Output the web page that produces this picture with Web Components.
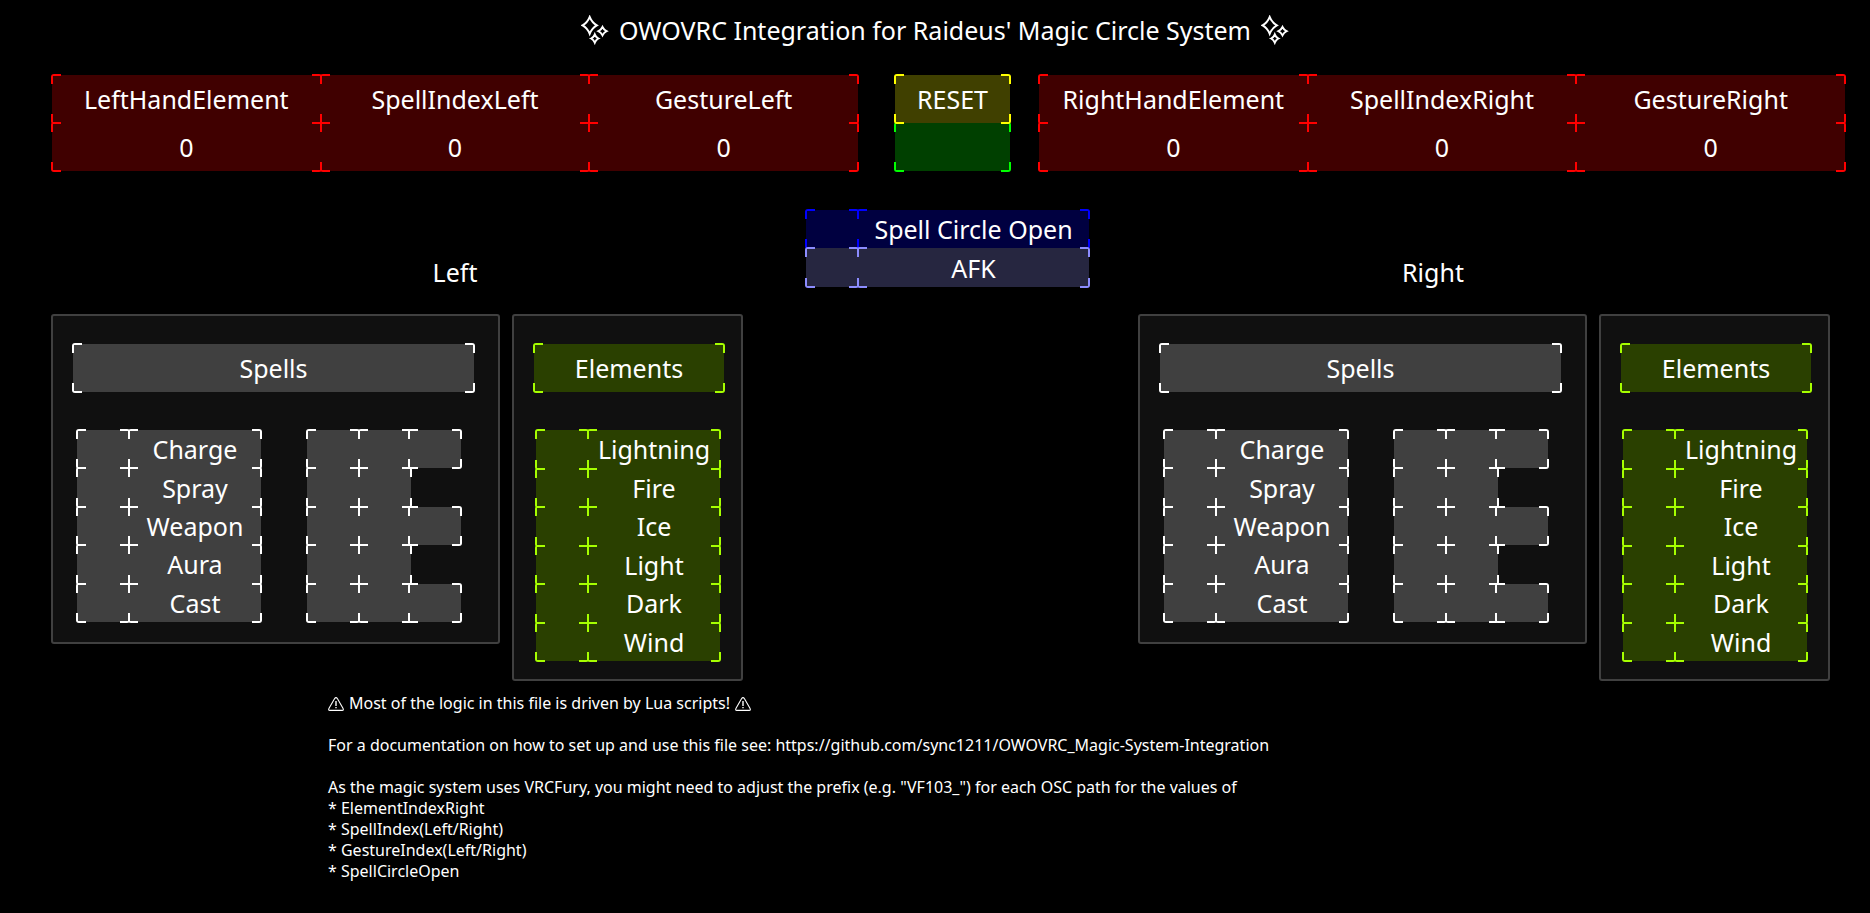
<!DOCTYPE html>
<html lang="en">
<head>
<meta charset="utf-8">
<title>OWOVRC Integration for Raideus' Magic Circle System</title>
<style>
  html { background: #000; }
  body {
    margin: 0;
    background: #000;
    color: #fff;
    font: 25px/34px "Noto Sans", "Open Sans", sans-serif;
  }
</style>
</head>
<body>
<magic-board></magic-board>

<script>
/* A cell is a filled box with a bracket drawn over each of its four corners. */
const CELL_CSS = `
  .cell {
    position: relative;
    display: flex;
    align-items: center;
    justify-content: center;
    box-sizing: border-box;
    background: var(--fill);
    white-space: nowrap;
  }
  td.cell, th.cell { display: table-cell; }
  .cell::before {
    content: "";
    position: absolute;
    inset: -1px;
    border-radius: 3px;
    pointer-events: none;
    --c: linear-gradient(var(--line), var(--line));
    background:
      var(--c) 0 0 / 10px 2px, var(--c) 0 0 / 2px 10px,
      var(--c) 100% 0 / 10px 2px, var(--c) 100% 0 / 2px 10px,
      var(--c) 0 100% / 10px 2px, var(--c) 0 100% / 2px 10px,
      var(--c) 100% 100% / 10px 2px, var(--c) 100% 100% / 2px 10px;
    background-repeat: no-repeat;
  }
  .white  { --line: #fff;    --fill: #404040; }
  .lime   { --line: #a6ff00; --fill: #2a4000; }
  .red    { --line: #f00;    --fill: #400000; }
  .yellow { --line: #ff0;    --fill: #404000; }
  .green  { --line: #0f0;    --fill: #004000; }
  .blue   { --line: #00f;    --fill: #000040; }
  .violet { --line: #8c8cff; --fill: #262640; }
`;

class BaseElement extends HTMLElement {
  connectedCallback() {
    if (this.shadowRoot) return;
    this.attachShadow({ mode: "open" }).innerHTML =
      `<style>${CELL_CSS}${this.css()}</style>${this.html()}`;
  }
}

customElements.define("sparkle-icon", class extends BaseElement {
  css() { return `:host { display: block; width: 28px; height: 30px; } svg { display: block; }`; }
  html() {
    return `<svg width="28" height="30" viewBox="0 0 28 30" fill="none" stroke="#fff" stroke-width="1.9" aria-hidden="true">
      <path d="M8.7 1.9Q11 7.8 15.9 10.4Q11 13 8.7 18.9Q6.4 13 1.5 10.4Q6.4 7.8 8.7 1.9Z"/>
      <path d="M21.5 12Q22.9 14.9 25.6 16.2Q22.9 17.5 21.5 20.4Q20.1 17.5 17.4 16.2Q20.1 14.9 21.5 12Z"/>
      <path d="M13.8 19.3Q15 22.3 17.5 23.5Q15 24.7 13.8 27.7Q12.6 24.7 10.1 23.5Q12.6 22.3 13.8 19.3Z"/>
    </svg>`;
  }
});

customElements.define("warning-icon", class extends BaseElement {
  css() { return `:host { display: inline-block; width: 16px; height: 14px; } svg { display: block; }`; }
  html() {
    return `<svg width="16" height="14" viewBox="0 0 16 14" fill="none" stroke="#fff" aria-hidden="true">
      <path d="M6.5 1.7Q8 -.5 9.5 1.7L15.1 11.6Q15.9 13.4 14.2 13.4H1.8Q.1 13.4 .9 11.6Z" stroke-width="1.1"/>
      <path d="M8 4V9M8 10V11.3" stroke-width="1.4"/>
    </svg>`;
  }
});

/* Parameter names over their current values. */
customElements.define("value-table", class extends BaseElement {
  css() {
    return `:host { display: block; }
      table { width: 100%; table-layout: fixed; border-spacing: 0; font: inherit; }
      .cell { height: 48px; padding: 0; font-weight: 400; text-align: center; vertical-align: middle; }`;
  }
  html() {
    const names = this.getAttribute("names").split(" ");
    return `<table class="red">
      <thead><tr>${names.map(n => `<th class="cell" scope="col">${n}</th>`).join("")}</tr></thead>
      <tbody><tr>${names.map(() => `<td class="cell">0</td>`).join("")}</tr></tbody>
    </table>`;
  }
});

customElements.define("reset-control", class extends BaseElement {
  css() {
    return `:host { display: block; }
      .cell { height: 48px; }
      button { width: 100%; padding: 0; border: 0; color: inherit; font: inherit; z-index: 1; cursor: pointer; }`;
  }
  html() {
    return `<button type="button" class="cell yellow">RESET</button><div class="cell green"></div>`;
  }
});

customElements.define("circle-state", class extends BaseElement {
  css() {
    return `:host { display: grid; grid-template-columns: 52px 231px; grid-template-rows: 38px 39px; }`;
  }
  html() {
    return `<div class="cell blue"></div><div class="cell blue">Spell Circle Open</div>
      <div class="cell violet"></div><div class="cell violet">AFK</div>`;
  }
});

/* Indicator cell followed by its name, one row for each item. */
customElements.define("label-list", class extends BaseElement {
  css() {
    return `:host { display: block; }
      .rows { display: grid; grid-template-columns: 52px 132px; grid-auto-rows: 1fr; height: 100%; }`;
  }
  html() {
    const items = this.getAttribute("items").split(" ");
    return `<div class="rows ${this.getAttribute("tone")}">${
      items.map(t => `<div class="cell"></div><div class="cell">${t}</div>`).join("")}</div>`;
  }
});

/* Odd rows hold three indicators, even rows two. */
customElements.define("slot-grid", class extends BaseElement {
  css() {
    return `:host { display: block; }
      .rows { display: grid; grid-template-columns: 52px 50px 52px; grid-auto-rows: 1fr; height: 100%; }
      .second { width: 52px; }
      .first { grid-column: 1; }`;
  }
  html() {
    return `<div class="rows white">${[3, 2, 3, 2, 3].map(n =>
      `<div class="cell first"></div><div class="cell second"></div>${n > 2 ? `<div class="cell"></div>` : ""}`
    ).join("")}</div>`;
  }
});

customElements.define("group-panel", class extends BaseElement {
  css() {
    return `:host {
        display: block; box-sizing: border-box; padding: 28px 20px 20px;
        border: 2px solid #404040; border-radius: 3px; background: #101010;
      }
      h3 { margin: 0 0 38px; height: 48px; width: var(--heading-width); font: inherit; }`;
  }
  html() {
    return `<h3 class="cell ${this.getAttribute("tone")}">${this.getAttribute("heading")}</h3><slot></slot>`;
  }
});

customElements.define("hand-side", class extends BaseElement {
  css() {
    return `:host { display: block; }
      h2 { margin: 0 0 25px; font: inherit; text-align: center; }
      :host([side="left"]) h2 { padding-left: 116px; }
      :host([side="right"]) h2 { padding-right: 102px; }
      .panels { display: grid; grid-template-columns: 449px 231px; column-gap: 12px; align-items: start; }
      .spells { --heading-width: 401px; }
      .elements { --heading-width: 190px; padding-bottom: 18px; }
      .lists { display: flex; gap: 46px; height: 192px; padding-left: 4px; }
      .elements .lists { height: 231px; padding-left: 2px; }`;
  }
  html() {
    return `<h2><slot></slot></h2>
      <div class="panels">
        <group-panel class="spells" tone="white" heading="Spells">
          <div class="lists">
            <label-list tone="white" items="Charge Spray Weapon Aura Cast"></label-list>
            <slot-grid></slot-grid>
          </div>
        </group-panel>
        <group-panel class="elements" tone="lime" heading="Elements">
          <div class="lists">
            <label-list tone="lime" items="Lightning Fire Ice Light Dark Wind"></label-list>
          </div>
        </group-panel>
      </div>`;
  }
});

customElements.define("setup-notes", class extends BaseElement {
  css() {
    return `:host { display: block; font-size: 16px; line-height: 21px; }
      p { margin: 0 0 21px; }
      p.lead { margin: 0; }
      .warn { display: flex; align-items: center; gap: 5px; }
      ul { margin: 0; padding: 0; list-style: none; }
      a { color: inherit; text-decoration: none; }`;
  }
  html() {
    return `<p class="warn"><warning-icon></warning-icon><span>Most of the logic in this file is driven by Lua scripts!</span><warning-icon></warning-icon></p>
      <p>For a documentation on how to set up and use this file see: <a href="https://github.com/sync1211/OWOVRC_Magic-System-Integration">https://github.com/sync1211/OWOVRC_Magic-System-Integration</a></p>
      <p class="lead">As the magic system uses VRCFury, you might need to adjust the prefix (e.g. "VF103_") for each OSC path for the values of</p>
      <ul><li>* ElementIndexRight</li><li>* SpellIndex(Left/Right)</li><li>* GestureIndex(Left/Right)</li><li>* SpellCircleOpen</li></ul>`;
  }
});

customElements.define("magic-board", class extends BaseElement {
  css() {
    return `:host { display: block; padding-bottom: 24px; }
      header { display: flex; justify-content: center; align-items: center; gap: 10px; padding: 13px 0 28px; }
      h1 { margin: 0; font: inherit; }
      .values { display: grid; grid-template-columns: 1fr 123px 1fr; column-gap: 29px; padding: 0 25px 0 52px; }
      reset-control { margin-left: 8px; }
      .sides { display: grid; grid-template-columns: auto 1fr auto; align-items: start; padding: 39px 40px 0 51px; }
      hand-side { padding-top: 45px; }
      circle-state { justify-self: center; margin-left: 14px; }
      setup-notes { padding: 12px 40px 0 328px; }`;
  }
  html() {
    return `<header><sparkle-icon></sparkle-icon><h1>OWOVRC Integration for Raideus' Magic Circle System</h1><sparkle-icon></sparkle-icon></header>
      <main>
        <div class="values">
          <value-table names="LeftHandElement SpellIndexLeft GestureLeft"></value-table>
          <reset-control></reset-control>
          <value-table names="RightHandElement SpellIndexRight GestureRight"></value-table>
        </div>
        <div class="sides">
          <hand-side side="left">Left</hand-side>
          <circle-state></circle-state>
          <hand-side side="right">Right</hand-side>
        </div>
        <setup-notes></setup-notes>
      </main>`;
  }
});
</script>
</body>
</html>
